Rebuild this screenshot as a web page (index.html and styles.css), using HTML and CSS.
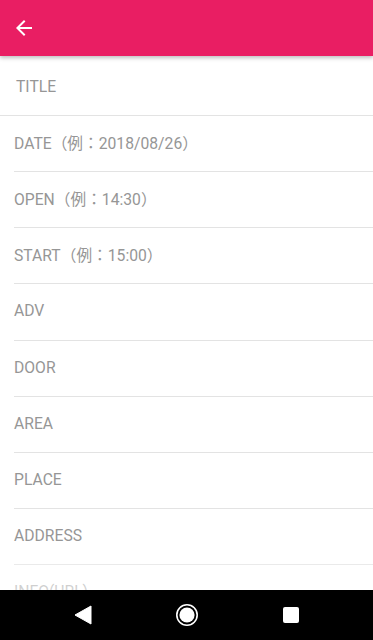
FILE: index.html
```html
<!DOCTYPE html>
<html lang="ja">
<head>
<meta charset="utf-8">
<link rel="stylesheet" href="styles.css">
</head>
<body>
<div class="app">
  <header class="toolbar">
    <svg class="back" width="24" height="24" viewBox="0 0 24 24"><path d="M20 11H7.83l5.59-5.59L12 4l-8 8 8 8 1.41-1.41L7.83 13H20v-2z" fill="#fff"/></svg>
  </header>
  <main class="content">
    <div class="field first">TITLE</div>
    <div class="field">DATE（例：2018/08/26）</div>
    <div class="field">OPEN（例：14:30）</div>
    <div class="field">START（例：15:00）</div>
    <div class="field">ADV</div>
    <div class="field">DOOR</div>
    <div class="field">AREA</div>
    <div class="field">PLACE</div>
    <div class="field">ADDRESS</div>
    <div class="field">INFO(URL)</div>
    <div class="field">MEMO</div>
    <div class="fade"></div>
  </main>
  <nav class="navbar">
    <svg width="18" height="20" viewBox="0 0 18 20"><path d="M17 1 L17 19 L1 10 Z" fill="#fff" stroke="#fff" stroke-linejoin="round" stroke-width="1"/></svg>
    <svg width="24" height="24" viewBox="0 0 24 24"><circle cx="12" cy="12" r="10.2" fill="none" stroke="#fff" stroke-width="1.6"/><circle cx="12" cy="12" r="7.6" fill="#fff"/></svg>
    <svg width="16" height="16" viewBox="0 0 16 16"><rect x="0" y="0" width="16" height="16" rx="2" fill="#fff"/></svg>
  </nav>
</div>
</body>
</html>
```
FILE: styles.css
```css
* { box-sizing: border-box; }
html, body { margin: 0; padding: 0; background: #fff; }
body { font-family: Roboto, "Noto Sans CJK JP", sans-serif; }
.app {
  width: 373px;
  height: 640px;
  display: flex;
  flex-direction: column;
  overflow: hidden;
}
.toolbar {
  height: 56px;
  flex: 0 0 56px;
  background: #e91e63;
  display: flex;
  align-items: center;
  padding-left: 12px;
  box-shadow: 0 2px 4px rgba(0,0,0,0.25);
  position: relative;
  z-index: 2;
}
.back { display: block; }
.content {
  flex: 1;
  overflow: hidden;
  position: relative;
}
.field {
  height: 56.15px;
  margin-left: 14px;
  border-bottom: 1px solid #e3e3e3;
  display: flex;
  align-items: center;
  font-size: 15.7px;
  color: #969696;
  padding-bottom: 2px;
  white-space: nowrap;
}
.field.first {
  height: 60px;
  margin-left: 0;
  padding-left: 16px;
  padding-top: 1px;
  padding-bottom: 0;
}
.fade {
  position: absolute;
  left: 0;
  right: 0;
  bottom: 0;
  height: 44px;
  background: linear-gradient(to bottom, rgba(255,255,255,0), rgba(255,255,255,0.6));
}
.navbar {
  height: 50px;
  flex: 0 0 50px;
  background: #000;
  display: flex;
  align-items: center;
  padding-left: 74px;
}
.navbar svg { display: block; }
.navbar svg:nth-child(1) { margin-right: 83px; }
.navbar svg:nth-child(2) { margin-right: 84px; }
```
